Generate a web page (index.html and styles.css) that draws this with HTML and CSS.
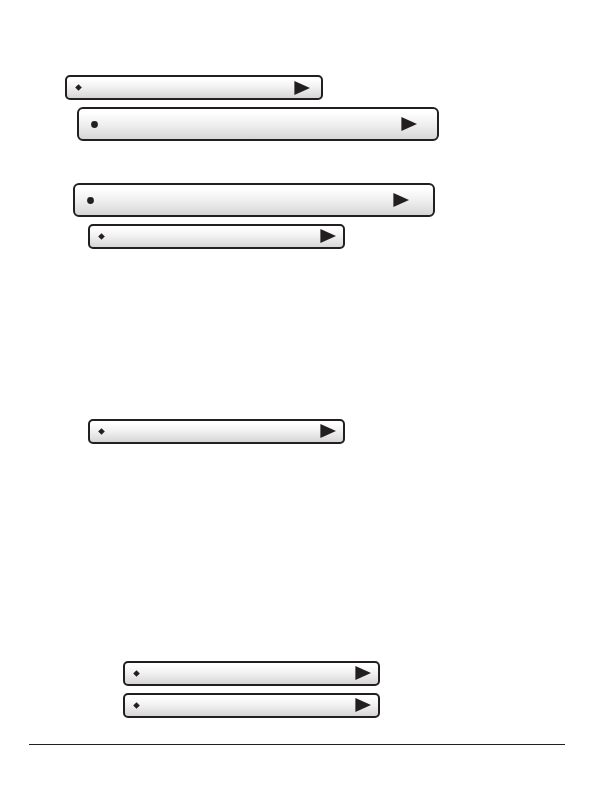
FILE: index.html
```html
<!DOCTYPE html>
<html lang="en">
<head>
<meta charset="utf-8">
<meta name="viewport" content="width=device-width, initial-scale=1">
<title>Menu</title>
<link rel="stylesheet" href="styles.css">
</head>
<body>
<svg class="symbols" aria-hidden="true">
  <symbol id="diamond" viewBox="0 0 7 7"><path d="M3.5 .2 6.8 3.5 3.5 6.8 .2 3.5z"/></symbol>
  <symbol id="dot" viewBox="0 0 7 7"><circle cx="3.5" cy="3.5" r="3.4"/></symbol>
  <symbol id="arrow" viewBox="0 0 16 14"><path d="M.4 0 16 7 .4 14z"/></symbol>
</svg>
<main class="page">
  <section class="group group-first">
    <button class="bar bar-first" type="button" aria-label="Item"><svg class="diamond"><use href="#diamond"/></svg><svg class="arrow"><use href="#arrow"/></svg></button>
    <button class="bar bar-large indent-small" type="button" aria-label="Section"><svg class="dot"><use href="#dot"/></svg><svg class="arrow"><use href="#arrow"/></svg></button>
  </section>
  <section class="group group-second">
    <button class="bar bar-large bar-inset" type="button" aria-label="Section"><svg class="dot"><use href="#dot"/></svg><svg class="arrow"><use href="#arrow"/></svg></button>
    <button class="bar indent-medium" type="button" aria-label="Item"><svg class="diamond"><use href="#diamond"/></svg><svg class="arrow"><use href="#arrow"/></svg></button>
  </section>
  <section class="group group-third">
    <button class="bar" type="button" aria-label="Item"><svg class="diamond"><use href="#diamond"/></svg><svg class="arrow"><use href="#arrow"/></svg></button>
  </section>
  <section class="group group-fourth">
    <button class="bar" type="button" aria-label="Item"><svg class="diamond"><use href="#diamond"/></svg><svg class="arrow"><use href="#arrow"/></svg></button>
    <button class="bar" type="button" aria-label="Item"><svg class="diamond"><use href="#diamond"/></svg><svg class="arrow"><use href="#arrow"/></svg></button>
  </section>
  <hr class="rule">
</main>
</body>
</html>
```
FILE: styles.css
```css
* {
  box-sizing: border-box;
}

body {
  margin: 0;
  background: #fff;
  font-family: "Liberation Sans", sans-serif;
}

.symbols {
  position: absolute;
  width: 0;
  height: 0;
}

.page {
  padding: 75px 29px 47px;
}

.group {
  display: flex;
  flex-direction: column;
  align-items: flex-start;
  gap: 7px;
}

.group-first {
  padding-left: 36px;
}

.group-second {
  margin-top: 42px;
  padding-left: 44px;
}

.group-third {
  margin-top: 170px;
  padding-left: 59px;
}

.group-fourth {
  margin-top: 217px;
  padding-left: 94px;
}

.bar {
  display: flex;
  align-items: center;
  justify-content: space-between;
  width: 257px;
  max-width: 100%;
  height: 25px;
  padding: 0 7px 1px 8px;
  border: 2px solid #231f20;
  border-radius: 5px;
  background: linear-gradient(#fff 10%, #f0f0f0 50%, #d6d6d6);
  color: #231f20;
}

.bar-first {
  width: 258px;
  padding: 0 11px 0 8px;
}

.bar-large {
  width: 362px;
  height: 34px;
  padding: 0 20px 0 12px;
  border-radius: 6px;
}

.bar-inset {
  padding-right: 24px;
}

.indent-small {
  margin-left: 12px;
}

.indent-medium {
  margin-left: 15px;
}

.bar svg {
  display: block;
  fill: currentColor;
}

.diamond {
  width: 7px;
  height: 7px;
}

.dot {
  width: 7px;
  height: 7px;
}

.arrow {
  width: 16px;
  height: 14px;
}

.rule {
  height: 1px;
  margin: 26px 0 0;
  border: 0;
  background: #231f20;
}
```
